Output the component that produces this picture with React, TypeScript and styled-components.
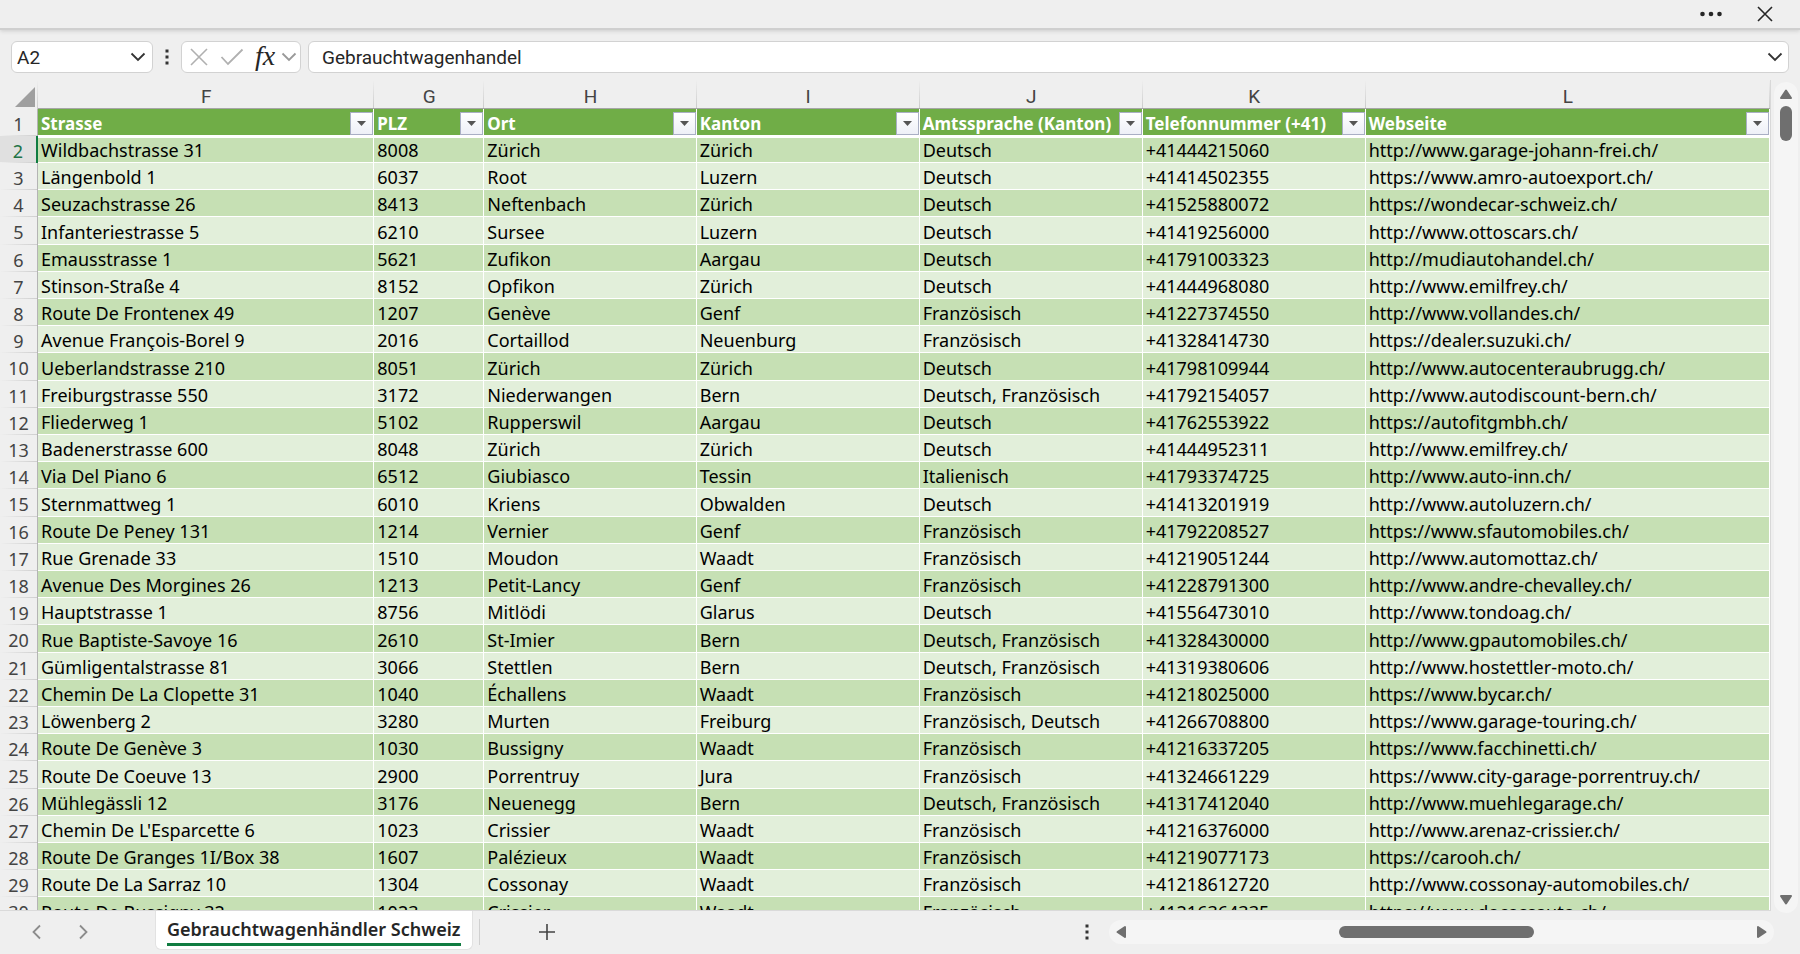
import React from "react";
import styled, { createGlobalStyle, css } from "styled-components";

const GlobalStyle = createGlobalStyle`
  *, *::before, *::after { box-sizing: border-box; }
  body { margin: 0; background: #efefef; }
  button, input { font: inherit; color: inherit; }
`;

const uiFont = `Roboto, "Liberation Sans", sans-serif`;
const cellFont = `"Noto Sans", "Open Sans", sans-serif`;

const Window = styled.div`
  display: flex;
  flex-direction: column;
  height: 100vh;
  overflow: hidden;
  background: #efefef;
  color: #262626;
  font: 18px/24px ${uiFont};
`;

const IconButton = styled.button<{ $w?: number }>`
  display: inline-flex;
  align-items: center;
  justify-content: center;
  flex: none;
  width: ${(p) => p.$w ?? 24}px;
  height: 24px;
  padding: 0;
  border: 0;
  background: transparent;
`;

const TitleBar = styled.header`
  display: flex;
  flex: none;
  justify-content: flex-end;
  gap: 30px;
  height: 30px;
  padding: 2px 23px 0 0;
  border-bottom: 2px solid #cfcfcf;
  box-shadow: 0 1px 4px #cccccc;
`;

const FormulaBar = styled.div`
  display: flex;
  flex: none;
  align-items: center;
  height: 50px;
  padding: 3px 11px 0 11px;
`;

const Box = styled.div`
  display: flex;
  align-items: center;
  height: 32px;
  border: 1px solid #d2d2d2;
  border-radius: 6px;
  background: #ffffff;
`;

const NameBox = styled(Box)`
  width: 142px;
  padding: 0 2px 0 5px;
`;

const FunctionBox = styled(Box)`
  width: 120px;
  padding-left: 3px;
`;

const FormulaBox = styled(Box)`
  flex: 1;
  min-width: 0;
  margin-left: 7px;
  padding: 0 1px 0 13px;
`;

const BarInput = styled.input`
  flex: 1;
  min-width: 0;
  width: 0;
  height: 26px;
  padding: 2px 0 0;
  border: 0;
  outline: 0;
  background: transparent;
  font-size: 19px;
`;

const FxButton = styled(IconButton)`
  margin-left: 2px;
  padding-bottom: 2px;
  font: italic 28px/24px "Liberation Serif", serif;
  color: #262626;
`;

const Workspace = styled.main`
  display: flex;
  flex: 1;
  min-height: 0;
  padding-right: 2px;
`;

const GridArea = styled.div`
  flex: 1;
  min-width: 0;
  overflow: hidden;
  border-right: 1px solid #d8d8d8;
  border-bottom: 1px solid #dadada;
`;

const Sheet = styled.table`
  width: 100%;
  table-layout: fixed;
  border-collapse: separate;
  border-spacing: 0;
  font: 18px/24px ${cellFont};
  color: #000000;
`;

const Col = styled.col<{ $w?: string }>`
  width: ${(p) => p.$w ?? "auto"};
`;

const fadeRight = css`
  background: linear-gradient(to bottom, #efefef, #cbcbcb) right / 1px 100% no-repeat;
`;

const ColumnHead = styled.th`
  height: 29px;
  padding: 5px 0 0;
  border-bottom: 1px solid #a6a6a6;
  ${fadeRight}
  color: #444444;
  font: 19px/22px ${uiFont};
`;

const Corner = styled.td`
  height: 29px;
  padding: 0 3px 2px 0;
  text-align: right;
  vertical-align: bottom;
  line-height: 0;
  ${fadeRight}
`;

const Row = styled.tr<{ $banded?: boolean }>`
  background: ${(p) => (p.$banded ? "#c6e0b4" : "#e2efda")};
  &:nth-child(5n) > * { height: 28px; }
  &:nth-child(2) > td { border-top: 2px solid #ffffff; padding-top: 0; }
`;

const RowHead = styled.th<{ $active?: boolean }>`
  height: 27px;
  padding: 2px 0 0;
  border-right: ${(p) => (p.$active ? "2px solid #107c41" : "1px solid #b4b4b4")};
  background: linear-gradient(to right, #efefef, #cfcfcf) bottom / 100% 1px no-repeat,
    ${(p) => (p.$active ? "#e0e0e0" : "#efefef")};
  color: ${(p) => (p.$active ? "#217346" : "#444444")};
  font-weight: 400;
  line-height: 22px;
`;

const Cell = styled.td`
  height: 27px;
  padding: 2px 0 0 3px;
  border-right: 1px solid #ffffff;
  border-bottom: 1px solid #ffffff;
  line-height: 22px;
  white-space: nowrap;
  overflow: hidden;
`;

const FieldHead = styled.th`
  height: 27px;
  padding: 0 0 0 3px;
  border-right: 1px solid #ffffff;
  border-bottom: 1px solid #ffffff;
  background: #70ad47;
  color: #ffffff;
  font-size: 17px;
  line-height: 22px;
  text-align: left;
`;

const FieldInner = styled.div`
  display: flex;
  align-items: flex-end;
  justify-content: space-between;
  height: 26px;
  white-space: nowrap;
`;

const FilterButton = styled.button`
  display: flex;
  align-items: center;
  justify-content: center;
  flex: none;
  width: 23px;
  height: 23px;
  padding: 0;
  border: 1px solid #a9afc4;
  background: linear-gradient(#ffffff, #eef0f7);
`;

const VerticalTrack = styled.div`
  display: flex;
  flex-direction: column;
  align-items: center;
  flex: none;
  width: 24px;
  margin: 2px 0 -2px 3px;
  padding: 0 0 1px;
  border-radius: 12px;
  background: #f5f5f5;
`;

const VerticalThumb = styled.div`
  width: 12px;
  height: 35px;
  border-radius: 6px;
  background: #6f6f6f;
`;

const Spacer = styled.div`
  flex: 1;
`;

const BottomBar = styled.footer`
  display: flex;
  flex: none;
  align-items: center;
  height: 43px;
  padding: 0 26px 2px 25px;
`;

const SheetNav = styled.nav`
  display: flex;
  gap: 22px;
  width: 130px;
`;

const SheetTab = styled.button`
  align-self: flex-start;
  height: 39px;
  padding: 0 11px;
  border: 1px solid #e2e2e2;
  border-top: 0;
  border-radius: 0 0 6px 6px;
  background: #ffffff;
  font: 600 18px/24px ${cellFont};
  white-space: nowrap;
`;

const TabLabel = styled.span`
  display: block;
  padding: 3px 0 2px;
  border-bottom: 3px solid #107c41;
`;

const Divider = styled.div`
  width: 1px;
  height: 26px;
  margin: 0 55px 0 6px;
  background: #d0d0d0;
`;

const HorizontalTrack = styled.div`
  display: flex;
  align-items: center;
  flex: none;
  width: 38%;
  height: 24px;
  margin-left: 10px;
  border-radius: 12px;
  background: #f5f5f5;
`;

const HorizontalThumb = styled.div`
  width: 195px;
  height: 12px;
  border-radius: 6px;
  background: #6f6f6f;
`;

const TrackGap = styled.div<{ $grow: number }>`
  flex: ${(p) => p.$grow} 1 0;
`;

const Chevron = ({ color = "#333333" }: { color?: string }) => (
  <svg width="16" height="10" viewBox="0 0 16 10" fill="none" stroke={color} strokeWidth="1.8">
    <path d="M1.5 1.5 8 8l6.500-6.500" />
  </svg>
);

const SideChevron = ({ flip = false }: { flip?: boolean }) => (
  <svg width="10" height="16" viewBox="0 0 10 16" fill="none" stroke="#8c8c8c" strokeWidth="1.8">
    <path d={flip ? "M2 1.500 8.500 8l-6.500 6.500" : "M8 1.500 1.500 8l6.500 6.500"} />
  </svg>
);

const Kebab = () => (
  <svg width="4" height="16" viewBox="0 0 4 16" fill="#333333">
    <path d="M.5.500h3v3h-3zM.5 6.500h3v3h-3zM.5 12.500h3v3h-3z" />
  </svg>
);

const arrowTurns = { up: 0, right: 90, down: 180, left: 270 };

const Arrow = ({ to }: { to: keyof typeof arrowTurns }) => (
  <svg width="14" height="14" viewBox="0 0 14 14" fill="#6f6f6f" stroke="#6f6f6f" strokeWidth="2" strokeLinejoin="round">
    <path d="M7 3.500 12 11H2z" transform={`rotate(${arrowTurns[to]} 7 7)`} />
  </svg>
);

const columns: { letter: string; field: string; width?: string }[] = [
  { letter: "F", field: "Strasse", width: "19%" },
  { letter: "G", field: "PLZ", width: "110px" },
  { letter: "H", field: "Ort", width: "12%" },
  { letter: "I", field: "Kanton", width: "223px" },
  { letter: "J", field: "Amtssprache (Kanton)", width: "223px" },
  { letter: "K", field: "Telefonnummer (+41)", width: "223px" },
  { letter: "L", field: "Webseite" },
];

const D = "Deutsch";
const FR = "Französisch";

const dealers: string[][] = [
  ["Wildbachstrasse 31", "8008", "Zürich", "Zürich", D, "+41444215060", "http://www.garage-johann-frei.ch/"],
  ["Längenbold 1", "6037", "Root", "Luzern", D, "+41414502355", "https://www.amro-autoexport.ch/"],
  ["Seuzachstrasse 26", "8413", "Neftenbach", "Zürich", D, "+41525880072", "https://wondecar-schweiz.ch/"],
  ["Infanteriestrasse 5", "6210", "Sursee", "Luzern", D, "+41419256000", "http://www.ottoscars.ch/"],
  ["Emausstrasse 1", "5621", "Zufikon", "Aargau", D, "+41791003323", "http://mudiautohandel.ch/"],
  ["Stinson-Straße 4", "8152", "Opfikon", "Zürich", D, "+41444968080", "http://www.emilfrey.ch/"],
  ["Route De Frontenex 49", "1207", "Genève", "Genf", FR, "+41227374550", "http://www.vollandes.ch/"],
  ["Avenue François-Borel 9", "2016", "Cortaillod", "Neuenburg", FR, "+41328414730", "https://dealer.suzuki.ch/"],
  ["Ueberlandstrasse 210", "8051", "Zürich", "Zürich", D, "+41798109944", "http://www.autocenteraubrugg.ch/"],
  ["Freiburgstrasse 550", "3172", "Niederwangen", "Bern", "Deutsch, Französisch", "+41792154057", "http://www.autodiscount-bern.ch/"],
  ["Fliederweg 1", "5102", "Rupperswil", "Aargau", D, "+41762553922", "https://autofitgmbh.ch/"],
  ["Badenerstrasse 600", "8048", "Zürich", "Zürich", D, "+41444952311", "http://www.emilfrey.ch/"],
  ["Via Del Piano 6", "6512", "Giubiasco", "Tessin", "Italienisch", "+41793374725", "http://www.auto-inn.ch/"],
  ["Sternmattweg 1", "6010", "Kriens", "Obwalden", D, "+41413201919", "http://www.autoluzern.ch/"],
  ["Route De Peney 131", "1214", "Vernier", "Genf", FR, "+41792208527", "https://www.sfautomobiles.ch/"],
  ["Rue Grenade 33", "1510", "Moudon", "Waadt", FR, "+41219051244", "http://www.automottaz.ch/"],
  ["Avenue Des Morgines 26", "1213", "Petit-Lancy", "Genf", FR, "+41228791300", "http://www.andre-chevalley.ch/"],
  ["Hauptstrasse 1", "8756", "Mitlödi", "Glarus", D, "+41556473010", "http://www.tondoag.ch/"],
  ["Rue Baptiste-Savoye 16", "2610", "St-Imier", "Bern", "Deutsch, Französisch", "+41328430000", "http://www.gpautomobiles.ch/"],
  ["Gümligentalstrasse 81", "3066", "Stettlen", "Bern", "Deutsch, Französisch", "+41319380606", "http://www.hostettler-moto.ch/"],
  ["Chemin De La Clopette 31", "1040", "Échallens", "Waadt", FR, "+41218025000", "https://www.bycar.ch/"],
  ["Löwenberg 2", "3280", "Murten", "Freiburg", "Französisch, Deutsch", "+41266708800", "https://www.garage-touring.ch/"],
  ["Route De Genève 3", "1030", "Bussigny", "Waadt", FR, "+41216337205", "https://www.facchinetti.ch/"],
  ["Route De Coeuve 13", "2900", "Porrentruy", "Jura", FR, "+41324661229", "https://www.city-garage-porrentruy.ch/"],
  ["Mühlegässli 12", "3176", "Neuenegg", "Bern", "Deutsch, Französisch", "+41317412040", "http://www.muehlegarage.ch/"],
  ["Chemin De L'Esparcette 6", "1023", "Crissier", "Waadt", FR, "+41216376000", "http://www.arenaz-crissier.ch/"],
  ["Route De Granges 1I/Box 38", "1607", "Palézieux", "Waadt", FR, "+41219077173", "https://carooh.ch/"],
  ["Route De La Sarraz 10", "1304", "Cossonay", "Waadt", FR, "+41218612720", "http://www.cossonay-automobiles.ch/"],
  ["Route De Bussigny 32", "1023", "Crissier", "Waadt", FR, "+41216364335", "https://www.docossauto.ch/"],
];

export default function App() {
  return (
    <Window>
      <GlobalStyle />
      <TitleBar>
        <IconButton aria-label="Mehr">
          <svg width="24" height="6" viewBox="0 0 24 6" fill="#262626">
            <circle cx="3.500" cy="3" r="2.300" /><circle cx="12" cy="3" r="2.300" /><circle cx="20.500" cy="3" r="2.300" />
          </svg>
        </IconButton>
        <IconButton aria-label="Schliessen">
          <svg width="16" height="16" viewBox="0 0 16 16" stroke="#262626" strokeWidth="1.600">
            <path d="M1 1l14 14M15 1 1 15" />
          </svg>
        </IconButton>
      </TitleBar>

      <FormulaBar>
        <NameBox>
          <BarInput aria-label="Namenfeld" defaultValue="A2" />
          <IconButton aria-label="Namen anzeigen"><Chevron /></IconButton>
        </NameBox>
        <IconButton $w={28} aria-label="Optionen"><Kebab /></IconButton>
        <FunctionBox>
          <IconButton $w={28} aria-label="Abbrechen">
            <svg width="18" height="18" viewBox="0 0 18 18" stroke="#b0b0b0" strokeWidth="1.600">
              <path d="M1 1l16 16M17 1 1 17" />
            </svg>
          </IconButton>
          <IconButton $w={38} aria-label="Eingeben">
            <svg width="24" height="18" viewBox="0 0 24 18" fill="none" stroke="#b0b0b0" strokeWidth="1.800">
              <path d="M1.500 9 8 16 22.500 1.500" />
            </svg>
          </IconButton>
          <FxButton aria-label="Funktion einfügen">fx</FxButton>
          <IconButton aria-label="Funktionen"><Chevron color="#999999" /></IconButton>
        </FunctionBox>
        <FormulaBox>
          <BarInput aria-label="Bearbeitungsleiste" defaultValue="Gebrauchtwagenhandel" />
          <IconButton aria-label="Erweitern"><Chevron /></IconButton>
        </FormulaBox>
      </FormulaBar>

      <Workspace>
        <GridArea>
          <Sheet>
            <colgroup>
              <Col $w="38px" />
              {columns.map((c) => <Col key={c.letter} $w={c.width} />)}
            </colgroup>
            <thead>
              <tr>
                <Corner>
                  <svg width="20" height="20" viewBox="0 0 20 20" fill="#9f9f9f"><path d="M20 0v20H0z" /></svg>
                </Corner>
                {columns.map((c) => <ColumnHead key={c.letter} scope="col">{c.letter}</ColumnHead>)}
              </tr>
            </thead>
            <tbody>
              <Row>
                <RowHead scope="row">1</RowHead>
                {columns.map((c) => (
                  <FieldHead key={c.letter} scope="col">
                    <FieldInner>
                      {c.field}
                      <FilterButton aria-label={`${c.field} filtern`}>
                        <svg width="9" height="5" viewBox="0 0 9 5" fill="#555555"><path d="M0 0h9L4.500 5z" /></svg>
                      </FilterButton>
                    </FieldInner>
                  </FieldHead>
                ))}
              </Row>
              {dealers.map((dealer, i) => (
                <Row key={i} $banded={i % 2 === 0}>
                  <RowHead scope="row" $active={i === 0}>{i + 2}</RowHead>
                  {dealer.map((value, j) => <Cell key={j}>{value}</Cell>)}
                </Row>
              ))}
            </tbody>
          </Sheet>
        </GridArea>
        <VerticalTrack>
          <IconButton aria-label="Nach oben"><Arrow to="up" /></IconButton>
          <VerticalThumb />
          <Spacer />
          <IconButton aria-label="Nach unten"><Arrow to="down" /></IconButton>
        </VerticalTrack>
      </Workspace>

      <BottomBar>
        <SheetNav>
          <IconButton aria-label="Vorheriges Blatt"><SideChevron /></IconButton>
          <IconButton aria-label="Nächstes Blatt"><SideChevron flip /></IconButton>
        </SheetNav>
        <SheetTab><TabLabel>Gebrauchtwagenhändler Schweiz</TabLabel></SheetTab>
        <Divider />
        <IconButton aria-label="Neues Blatt">
          <svg width="16" height="16" viewBox="0 0 16 16" stroke="#444444" strokeWidth="1.600">
            <path d="M8 0v16M0 8h16" />
          </svg>
        </IconButton>
        <Spacer />
        <IconButton aria-label="Registerbreite"><Kebab /></IconButton>
        <HorizontalTrack>
          <IconButton aria-label="Nach links"><Arrow to="left" /></IconButton>
          <TrackGap $grow={205} />
          <HorizontalThumb />
          <TrackGap $grow={215} />
          <IconButton aria-label="Nach rechts"><Arrow to="right" /></IconButton>
        </HorizontalTrack>
      </BottomBar>
    </Window>
  );
}
